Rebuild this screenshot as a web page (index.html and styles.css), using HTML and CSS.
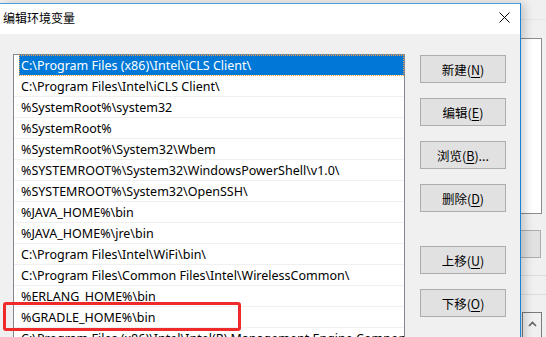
FILE: index.html
```html
<!DOCTYPE html>
<html lang="zh-CN">
  <head>
    <meta charset="UTF-8" />
    <title>编辑环境变量</title>
    <link rel="stylesheet" href="styles.css">
  </head>
  <body>
    <!-- the window behind the dialog, only its right edge shows -->
    <div class="backdrop">
      <div class="bg-list"></div>
      <div class="bg-button"></div>
      <div class="bg-line bg-line-top"></div>
      <div class="bg-line bg-line-a"></div>
      <div class="bg-line bg-line-b"></div>
      <div class="bg-scroll">
        <svg width="9" height="6" viewBox="0 0 9 6"><path d="M1 5 L4.5 1.5 L8 5" fill="none" stroke="#606060" stroke-width="1.6"/></svg>
      </div>
    </div>

    <div class="dialog">
      <div class="titlebar">
        <span class="title">编辑环境变量</span>
        <span class="close">
          <svg width="11" height="11" viewBox="0 0 11 11"><path d="M0.5 0.5 L10.5 10.5 M10.5 0.5 L0.5 10.5" stroke="#000" stroke-width="1"/></svg>
        </span>
      </div>

      <div class="dialog-body">
        <ul class="path-list">
          <li class="path-item selected">C:\Program Files (x86)\Intel\iCLS Client\</li>
          <li class="path-item">C:\Program Files\Intel\iCLS Client\</li>
          <li class="path-item">%SystemRoot%\system32</li>
          <li class="path-item">%SystemRoot%</li>
          <li class="path-item">%SystemRoot%\System32\Wbem</li>
          <li class="path-item">%SYSTEMROOT%\System32\WindowsPowerShell\v1.0\</li>
          <li class="path-item">%SYSTEMROOT%\System32\OpenSSH\</li>
          <li class="path-item">%JAVA_HOME%\bin</li>
          <li class="path-item">%JAVA_HOME%\jre\bin</li>
          <li class="path-item">C:\Program Files\Intel\WiFi\bin\</li>
          <li class="path-item">C:\Program Files\Common Files\Intel\WirelessCommon\</li>
          <li class="path-item">%ERLANG_HOME%\bin</li>
          <li class="path-item">%GRADLE_HOME%\bin</li>
          <li class="path-item">C:\Program Files (x86)\Intel\Intel(R) Management Engine Components\DAL</li>
        </ul>

        <div class="actions">
          <button class="win-button">新建(<u>N</u>)</button>
          <button class="win-button">编辑(<u>E</u>)</button>
          <button class="win-button">浏览(<u>B</u>)...</button>
          <button class="win-button">删除(<u>D</u>)</button>
          <button class="win-button move-up">上移(<u>U</u>)</button>
          <button class="win-button">下移(<u>O</u>)</button>
        </div>
      </div>
    </div>

    <!-- red annotation box round the GRADLE row -->
    <div class="highlight"></div>
  </body>
</html>
```

FILE: styles.css
```css
* {
  margin: 0;
  padding: 0;
  box-sizing: border-box;
}

body {
  font-family: "Noto Sans", "Noto Sans CJK SC", sans-serif;
  font-size: 12px;
  color: #000;
  background: #f0f0f0;
  width: 546px;
  height: 337px;
  overflow: hidden;
  position: relative;
}

/* background window */
.backdrop {
  position: absolute;
  inset: 0;
}

.bg-list {
  position: absolute;
  left: 500px;
  top: 38px;
  width: 42px;
  height: 176px;
  background: #fff;
  border: 1px solid #8c8c8c;
}

.bg-button {
  position: absolute;
  left: 500px;
  top: 230px;
  width: 41px;
  height: 28px;
  background: #e1e1e1;
  border: 1px solid #adadad;
}

.bg-line {
  position: absolute;
  left: 500px;
  right: 0;
  height: 1px;
  background: #dcdcdc;
}

.bg-line-top {
  top: 19px;
  background: #e6e6e6;
}

.bg-line-a {
  top: 275px;
}

.bg-line-b {
  top: 294px;
}

.bg-scroll {
  position: absolute;
  left: 522px;
  top: 312px;
  width: 20px;
  height: 40px;
  background: #f0f0f0;
  border: 1px solid #7a7a7a;
  display: flex;
  justify-content: center;
  padding-top: 8px;
}

.bg-scroll svg {
  display: block;
}

/* dialog */
.dialog {
  position: absolute;
  left: 0;
  top: 3px;
  width: 521px;
  height: 400px;
  background: #f0f0f0;
  border-top: 1px solid #4a9ee0;
  border-right: 1px solid #1883d7;
  box-shadow: 4px 0 9px rgba(0, 0, 0, 0.18);
  display: flex;
  flex-direction: column;
}

.titlebar {
  height: 30px;
  background: #fff;
  display: flex;
  align-items: center;
  justify-content: space-between;
  padding: 0 10px 3px 3px;
}

.title {
  font-family: "Noto Sans CJK SC", sans-serif;
  font-size: 12px;
  line-height: 16px;
}

.close {
  display: flex;
  width: 11px;
  height: 11px;
}

.dialog-body {
  flex: 1;
  display: flex;
  align-items: flex-start;
  padding: 20px 0 0 13px;
  gap: 15px;
}

.path-list {
  list-style: none;
  width: 392px;
  height: 320px;
  background: #fff;
  border: 1px solid #828790;
  overflow: hidden;
}

.path-item {
  height: 21px;
  line-height: 21px;
  font-size: 12.5px;
  padding-left: 7px;
  border-bottom: 1px solid #f0f0f0;
  white-space: nowrap;
  overflow: hidden;
}

.path-item.selected {
  margin-left: 5px;
  padding-left: 2px;
  background: #0078d7;
  color: #fff;
  outline: 1px dotted #f7a045;
  outline-offset: -1px;
}

.actions {
  display: flex;
  flex-direction: column;
  gap: 15px;
  padding-top: 1px;
}

.win-button {
  width: 86px;
  height: 28px;
  background: #e1e1e1;
  border: 1px solid #adadad;
  font-family: "Noto Sans CJK SC", sans-serif;
  font-size: 12.5px;
  color: #000;
}

.win-button u {
  text-decoration-thickness: 1px;
  text-underline-offset: 2px;
}

.move-up {
  margin-top: 19px;
}

.highlight {
  position: absolute;
  left: 3px;
  top: 302px;
  width: 238px;
  height: 29px;
  border: 3px solid #ef2a2a;
  border-radius: 3px;
}
```
